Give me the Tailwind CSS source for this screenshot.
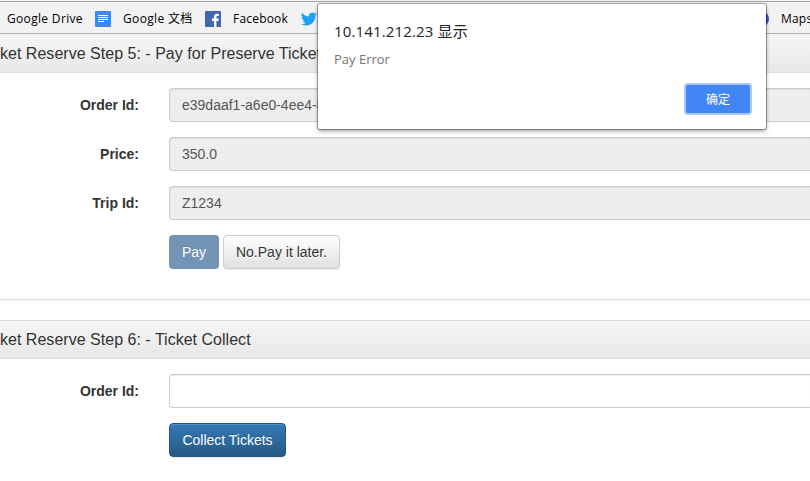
<!DOCTYPE html>
<html lang="zh">
<head>
<meta charset="utf-8">
<title>Ticket Reserve</title>
<script src="https://cdn.jsdelivr.net/npm/@tailwindcss/browser@4"></script>
</head>
<body class="relative w-[810px] h-[481px] overflow-hidden bg-white text-[14px] leading-5 text-[#333] font-['Liberation_Sans',sans-serif]">
<nav class="flex h-[34px] items-center border-b border-[#b2b2b2] bg-[#f2f2f2] pt-[5px] pl-[7px] text-[12px] text-black whitespace-nowrap shadow-[inset_0_1px_0_#f2f2f2,inset_0_2px_0_#a6a8a8] font-['Open_Sans','Noto_Sans_CJK_SC',sans-serif]">
  <span class="w-[88px] shrink-0 tracking-[0.33px]">Google Drive</span>
  <svg class="mr-3 h-4 w-4 shrink-0" viewBox="0 0 16 16"><rect width="16" height="16" rx="1" fill="#4285f4"/><path d="M3 4.5h10M3 6.5h10M3 8.5h10M3 10.500h6" stroke="#fff"/></svg>
  <span class="w-[82px] shrink-0 tracking-[0.35px]">Google 文档</span>
  <svg class="mr-3 h-4 w-4 shrink-0" viewBox="0 0 16 16"><rect width="16" height="16" rx=".5" fill="#4267b2"/><path d="M9 16V10H7V7.500h2V6c0-2.200 1.200-3.300 3.200-3.300l1.600.1V5h-1.100C11.700 5 11.400 5.500 11.400 6.200v1.300h2.400L13.400 10h-2v6z" fill="#fff"/></svg>
  <span class="w-[68px] shrink-0 tracking-[0.2px]">Facebook</span>
  <svg class="h-4 w-4 shrink-0" viewBox="0 0 24 24"><path fill="#1da1f2" d="M23.950 4.570a10 10 0 01-2.820.770 4.960 4.960 0 002.160-2.720c-.950.550-2 .950-3.120 1.180a4.920 4.920 0 00-8.390 4.480C7.690 8.090 4.070 6.130 1.640 3.160a4.900 4.900 0 001.520 6.570 4.900 4.900 0 01-2.230-.610v.060a4.920 4.920 0 003.950 4.830 5 5 0 01-2.210.080 4.940 4.940 0 004.600 3.420A9.870 9.870 0 010 19.540a13.990 13.990 0 007.550 2.210c9.050 0 14-7.500 14-13.980l-.020-.630a9.900 9.900 0 002.420-2.570z"/></svg>
  <span class="ml-[436px] h-4 w-4 shrink-0 rounded-full bg-[#3f51e0]"></span>
  <span class="ml-3 shrink-0 tracking-[0.2px]">Maps</span>
</nav>

<section class="h-[266px] border-b border-[#ddd] shadow-[0_1px_2px_rgba(0,0,0,0.05)]">
  <h3 class="h-[39px] border-b border-[#ddd] bg-linear-to-b from-[#f5f5f5] to-[#e8e8e8] pt-[11px] text-[16px] leading-[18px] tracking-[0.02px] whitespace-nowrap">ket Reserve Step 5: - Pay for Preserve Tickets</h3>
  <div class="grid grid-cols-[139px_1fr] gap-x-[30px] gap-y-[15px] pt-[15px]">
    <label class="pt-[7px] text-right font-bold">Order Id:</label>
    <div class="h-[34px] rounded-l border border-r-0 border-[#ccc] bg-[#eee] px-3 py-[6px] text-[#555] shadow-[inset_0_1px_1px_rgba(0,0,0,0.075)]">e39daaf1-a6e0-4ee4-8</div>
    <label class="pt-[7px] text-right font-bold">Price:</label>
    <div class="h-[34px] rounded-l border border-r-0 border-[#ccc] bg-[#eee] px-3 py-[6px] text-[#555] shadow-[inset_0_1px_1px_rgba(0,0,0,0.075)]">350.0</div>
    <label class="pt-[7px] text-right font-bold">Trip Id:</label>
    <div class="h-[34px] rounded-l border border-r-0 border-[#ccc] bg-[#eee] px-3 py-[6px] text-[#555] shadow-[inset_0_1px_1px_rgba(0,0,0,0.075)]">Z1234</div>
    <div class="col-start-2 flex gap-1">
      <button class="h-[34px] w-[50px] rounded bg-[#7394b4] text-white [text-shadow:0_-1px_0_rgba(0,0,0,0.13)]">Pay</button>
      <button class="h-[34px] w-[117px] rounded border border-[#ccc] bg-linear-to-b from-white to-[#e0e0e0] whitespace-nowrap shadow-[0_1px_1px_rgba(0,0,0,0.075)] [text-shadow:0_1px_0_#fff]">No.Pay it later.</button>
    </div>
  </div>
</section>

<section class="mt-5">
  <h3 class="h-[39px] border-y border-[#ddd] bg-linear-to-b from-[#f5f5f5] to-[#e8e8e8] pt-[10px] text-[16px] leading-[18px] tracking-[0.02px] whitespace-nowrap">ket Reserve Step 6: - Ticket Collect</h3>
  <div class="grid grid-cols-[139px_1fr] gap-x-[30px] gap-y-[15px] pt-[15px]">
    <label class="pt-[7px] text-right font-bold">Order Id:</label>
    <div class="h-[34px] rounded-l border border-r-0 border-[#ccc] bg-white shadow-[inset_0_1px_1px_rgba(0,0,0,0.075)]"></div>
    <button class="col-start-2 h-[34px] w-[117px] rounded border border-[#245580] bg-linear-to-b from-[#337ab7] to-[#265a88] whitespace-nowrap text-white shadow-[inset_0_1px_0_rgba(255,255,255,0.15),0_1px_1px_rgba(0,0,0,0.075)] [text-shadow:0_-1px_0_rgba(0,0,0,0.2)]">Collect Tickets</button>
  </div>
</section>

<div role="dialog" class="absolute top-[4px] left-[318px] h-[125px] w-[448px] rounded-[2px] bg-white px-4 shadow-[0_0_0_1px_rgba(0,0,0,0.3),0_2px_4px_rgba(0,0,0,0.4)] font-['Open_Sans','Noto_Sans_CJK_SC',sans-serif]">
  <h2 class="pt-[16px] text-[15px] leading-[22px] tracking-[0.15px] whitespace-nowrap text-[#222]">10.141.212.23 显示</h2>
  <p class="mt-[7px] text-[13px] leading-5 text-[#757575]">Pay Error</p>
  <div class="mt-[16px] flex justify-end">
    <button class="h-[28px] w-[64px] rounded-[2px] bg-[#4285f4] pt-[2px] text-[12px] leading-5 text-white shadow-[0_0_0_2px_#a9c7fa]">确定</button>
  </div>
</div>
</body>
</html>
